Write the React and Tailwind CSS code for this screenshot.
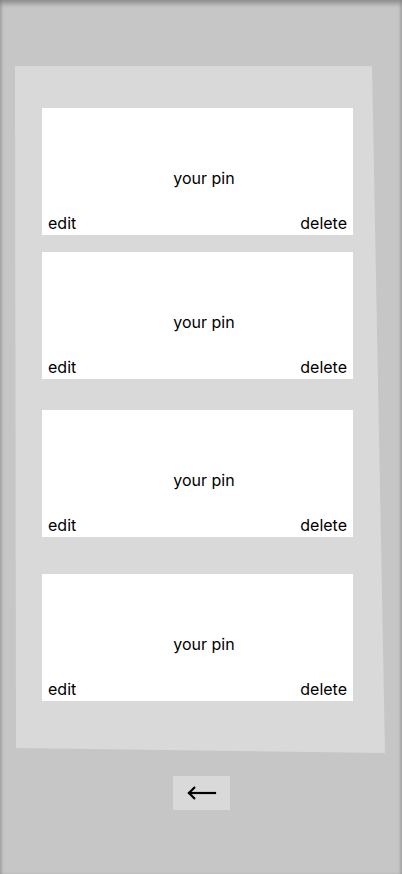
import { useState } from 'react';

const pins = [
  { id: 1, mt: 'mt-[42px]' },
  { id: 2, mt: 'mt-[17px]' },
  { id: 3, mt: 'mt-[31px]' },
  { id: 4, mt: 'mt-[37px]' },
];

function PinCard({ className }) {
  return (
    <div className={`w-[311px] h-[127px] bg-white flex flex-col px-[6px] pb-[2px] ${className}`}>
      <p className="pt-[60px] pl-[13px] text-center leading-[20px]">your pin</p>
      <div className="mt-auto flex justify-between leading-[20px]">
        <button className="cursor-pointer">edit</button>
        <button className="cursor-pointer">delete</button>
      </div>
    </div>
  );
}

export default function App() {
  const [items] = useState(pins);

  return (
    <div
      className="w-[402px] h-[874px] bg-[#c6c6c6] shadow-[inset_0_4px_4px_rgba(0,0,0,0.25),inset_2px_0_2px_rgba(0,0,0,0.08),inset_-2px_0_2px_rgba(0,0,0,0.08)] text-base text-black flex flex-col items-start pt-[66px]"
      style={{ fontFamily: 'Inter, "Noto Sans", sans-serif' }}
    >
      <div className="ml-[15px] w-[370px] h-[687px] bg-[#d9d9d9] [clip-path:polygon(0_0,357px_0,370px_687px,1px_682px)] flex flex-col pl-[27px]">
        {items.map((p) => (
          <PinCard key={p.id} className={p.mt} />
        ))}
      </div>
      <button className="self-center mt-[23px] ml-[1px] w-[57px] h-[34px] bg-[#d9d9d9] flex items-center justify-center">
        <svg width="30" height="16" viewBox="0 0 30 16" fill="none" stroke="black" strokeWidth="2.2" strokeLinecap="square">
          <path d="M2 8H28" />
          <path d="M8 2L2 8L8 14" strokeLinecap="butt" strokeLinejoin="miter" />
        </svg>
      </button>
    </div>
  );
}
